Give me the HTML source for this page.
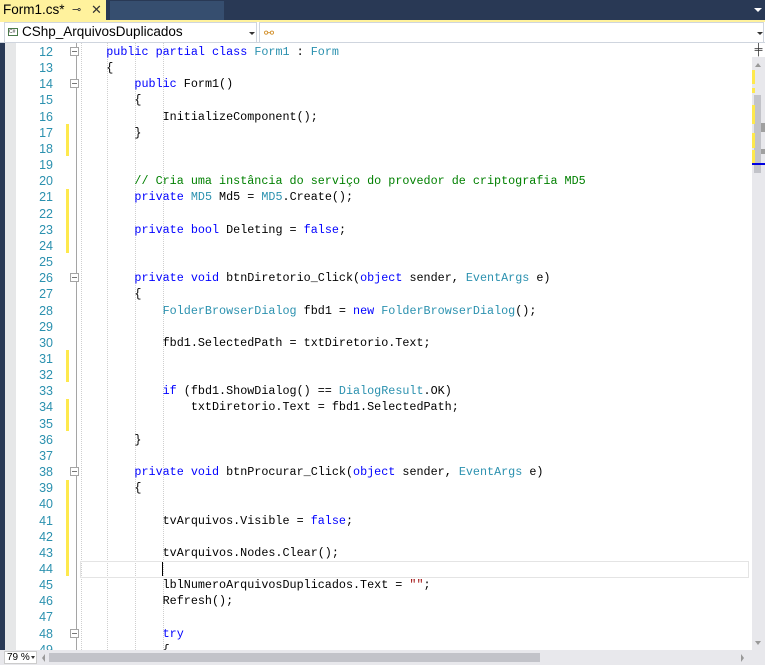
<!DOCTYPE html>
<html><head><meta charset="utf-8"><style>
*{margin:0;padding:0;box-sizing:border-box}
body{width:765px;height:665px;overflow:hidden;background:#fff;position:relative;font-family:"Liberation Sans",sans-serif}
.abs{position:absolute}
.clip{position:absolute;left:0;top:43px;width:752px;height:607px;overflow:hidden}
pre{position:absolute;left:78px;top:1px;font-family:"Liberation Mono",monospace;font-size:11.75px;line-height:16.16px;color:#000;white-space:pre}
.k{color:#0000ff}.t{color:#2b91af}.c{color:#008000}.s{color:#a31515}
.ln{position:absolute;left:20px;width:33px;top:1px;text-align:right;font-family:"Liberation Sans",sans-serif;font-size:12.5px;line-height:16.16px;color:#2b91af}
.y{position:absolute;left:66px;width:3px;background:#fee94d}
.g{position:absolute;top:43px;height:607px;border-left:1px dotted #cfcfcf}
.m{position:absolute;left:70px;width:9px;height:9px;border:1px solid #a5a5a5;background:#fff}
.m:after{content:"";position:absolute;left:1px;top:3px;width:5px;height:1px;background:#777}
</style></head><body>
<div class="abs" style="left:0;top:0;width:765px;height:20px;background:#293955"></div>
<div class="abs" style="left:0;top:0;width:106px;height:21px;background:#fff29d"></div>
<div class="abs" style="left:110px;top:1px;width:114px;height:19px;background:#364e6f"></div>
<div class="abs" style="left:3px;top:2px;font-size:13.5px;color:#000">Form1.cs*</div>
<div class="abs" style="left:72px;top:3px;font-size:11px;color:#333">⊸</div>
<div class="abs" style="left:91px;top:2px;font-size:13px;color:#333">✕</div>
<div class="abs" style="left:754px;top:8px;width:0;height:0;border-left:4px solid transparent;border-right:4px solid transparent;border-top:4px solid #fff"></div>
<div class="abs" style="left:0;top:20px;width:765px;height:2px;background:#fff29d"></div>
<div class="abs" style="left:0;top:22px;width:765px;height:21px;background:#fff;border-bottom:1px solid #cfd5de"></div>
<div class="abs" style="left:4px;top:22px;width:253px;height:21px;border:1px solid #cfd5de"></div>
<div class="abs" style="left:259px;top:22px;width:505px;height:21px;border:1px solid #cfd5de"></div>
<div class="abs" style="left:8px;top:28px;width:10px;height:8px;border:1px solid #4a7a4a;font-size:5px;line-height:6px;color:#333">C#</div>
<div class="abs" style="left:22px;top:24px;font-size:13.5px;color:#000">CShp_ArquivosDuplicados</div>
<div class="abs" style="left:249px;top:32px;border-left:3px solid transparent;border-right:3px solid transparent;border-top:3px solid #333"></div>
<div class="abs" style="left:757px;top:32px;border-left:3px solid transparent;border-right:3px solid transparent;border-top:3px solid #333"></div>
<div class="abs" style="left:264px;top:26px;color:#d08a20;font-size:12px">⚯</div>
<div class="abs" style="left:0;top:43px;width:5px;height:622px;background:#293955"></div>
<div class="abs" style="left:5px;top:43px;width:11px;height:607px;background:#e6e7e8"></div>
<div class="abs" style="left:76px;top:43px;width:1px;height:607px;background:#a5a5a5"></div>
<div class="g" style="left:81px"></div><div class="g" style="left:107px"></div><div class="g" style="left:135px"></div><div class="g" style="left:163px"></div>
<div class="y" style="top:124px;height:32px"></div>
<div class="y" style="top:189px;height:64px"></div>
<div class="y" style="top:350px;height:32px"></div>
<div class="y" style="top:399px;height:32px"></div>
<div class="y" style="top:480px;height:96px"></div>
<div class="m" style="top:47px"></div><div class="m" style="top:79px"></div><div class="m" style="top:273px"></div><div class="m" style="top:467px"></div><div class="m" style="top:629px"></div>
<div class="abs" style="left:80px;top:561px;width:669px;height:17px;border:1px solid #e4e4e4"></div>
<div class="abs" style="left:162px;top:562px;width:1px;height:14px;background:#000"></div>
<div class="clip">
<div class="ln">12<br>13<br>14<br>15<br>16<br>17<br>18<br>19<br>20<br>21<br>22<br>23<br>24<br>25<br>26<br>27<br>28<br>29<br>30<br>31<br>32<br>33<br>34<br>35<br>36<br>37<br>38<br>39<br>40<br>41<br>42<br>43<br>44<br>45<br>46<br>47<br>48<br>49</div>
<pre>    <span class="k">public partial class</span> <span class="t">Form1</span> : <span class="t">Form</span>
    {
        <span class="k">public</span> Form1()
        {
            InitializeComponent();
        }


        <span class="c">// Cria uma instância do serviço do provedor de criptografia MD5</span>
        <span class="k">private</span> <span class="t">MD5</span> Md5 = <span class="t">MD5</span>.Create();

        <span class="k">private bool</span> Deleting = <span class="k">false</span>;


        <span class="k">private void</span> btnDiretorio_Click(<span class="k">object</span> sender, <span class="t">EventArgs</span> e)
        {
            <span class="t">FolderBrowserDialog</span> fbd1 = <span class="k">new</span> <span class="t">FolderBrowserDialog</span>();

            fbd1.SelectedPath = txtDiretorio.Text;


            <span class="k">if</span> (fbd1.ShowDialog() == <span class="t">DialogResult</span>.OK)
                txtDiretorio.Text = fbd1.SelectedPath;

        }

        <span class="k">private void</span> btnProcurar_Click(<span class="k">object</span> sender, <span class="t">EventArgs</span> e)
        {

            tvArquivos.Visible = <span class="k">false</span>;

            tvArquivos.Nodes.Clear();

            lblNumeroArquivosDuplicados.Text = <span class="s">""</span>;
            Refresh();

            <span class="k">try</span>
            {</pre>
</div>
<div class="abs" style="left:752px;top:43px;width:13px;height:607px;background:#e8e8ec"></div>
<div class="abs" style="left:752px;top:43px;width:13px;height:14px;background:#fff;font-size:11px;line-height:14px;text-align:center;color:#333">╪</div>
<div class="abs" style="left:755px;top:63px;border-left:3.5px solid transparent;border-right:3.5px solid transparent;border-bottom:4px solid #999"></div>
<div class="abs" style="left:754px;top:95px;width:7px;height:78px;background:#c2c3c9"></div>
<div class="abs" style="left:752px;top:70px;width:3px;height:14px;background:#fee94d"></div>
<div class="abs" style="left:752px;top:88px;width:3px;height:5px;background:#fee94d"></div>
<div class="abs" style="left:752px;top:105px;width:3px;height:19px;background:#fee94d"></div>
<div class="abs" style="left:752px;top:133px;width:3px;height:15px;background:#fee94d"></div>
<div class="abs" style="left:752px;top:150px;width:3px;height:15px;background:#fee94d"></div>
<div class="abs" style="left:761px;top:123px;width:4px;height:9px;background:#a0a0a0"></div>
<div class="abs" style="left:761px;top:149px;width:4px;height:5px;background:#a0a0a0"></div>
<div class="abs" style="left:752px;top:163px;width:13px;height:2px;background:#0000e0"></div>
<div class="abs" style="left:755px;top:641px;border-left:3.5px solid transparent;border-right:3.5px solid transparent;border-top:4px solid #999"></div>
<div class="abs" style="left:0;top:650px;width:765px;height:15px;background:#e8e8ec"></div>
<div class="abs" style="left:4px;top:651px;width:33px;height:13px;background:#fff;border:1px solid #ccc;font-size:10px;line-height:11px;padding-left:2px">79 %</div>
<div class="abs" style="left:31px;top:656px;border-left:2.5px solid transparent;border-right:2.5px solid transparent;border-top:3px solid #333"></div>
<div class="abs" style="left:42px;top:654px;border-top:4px solid transparent;border-bottom:4px solid transparent;border-right:3px solid #999"></div>
<div class="abs" style="left:49px;top:653px;width:491px;height:9px;background:#c2c3c9"></div>
<div class="abs" style="left:741px;top:654px;border-top:4px solid transparent;border-bottom:4px solid transparent;border-left:3px solid #999"></div>
</body></html>
